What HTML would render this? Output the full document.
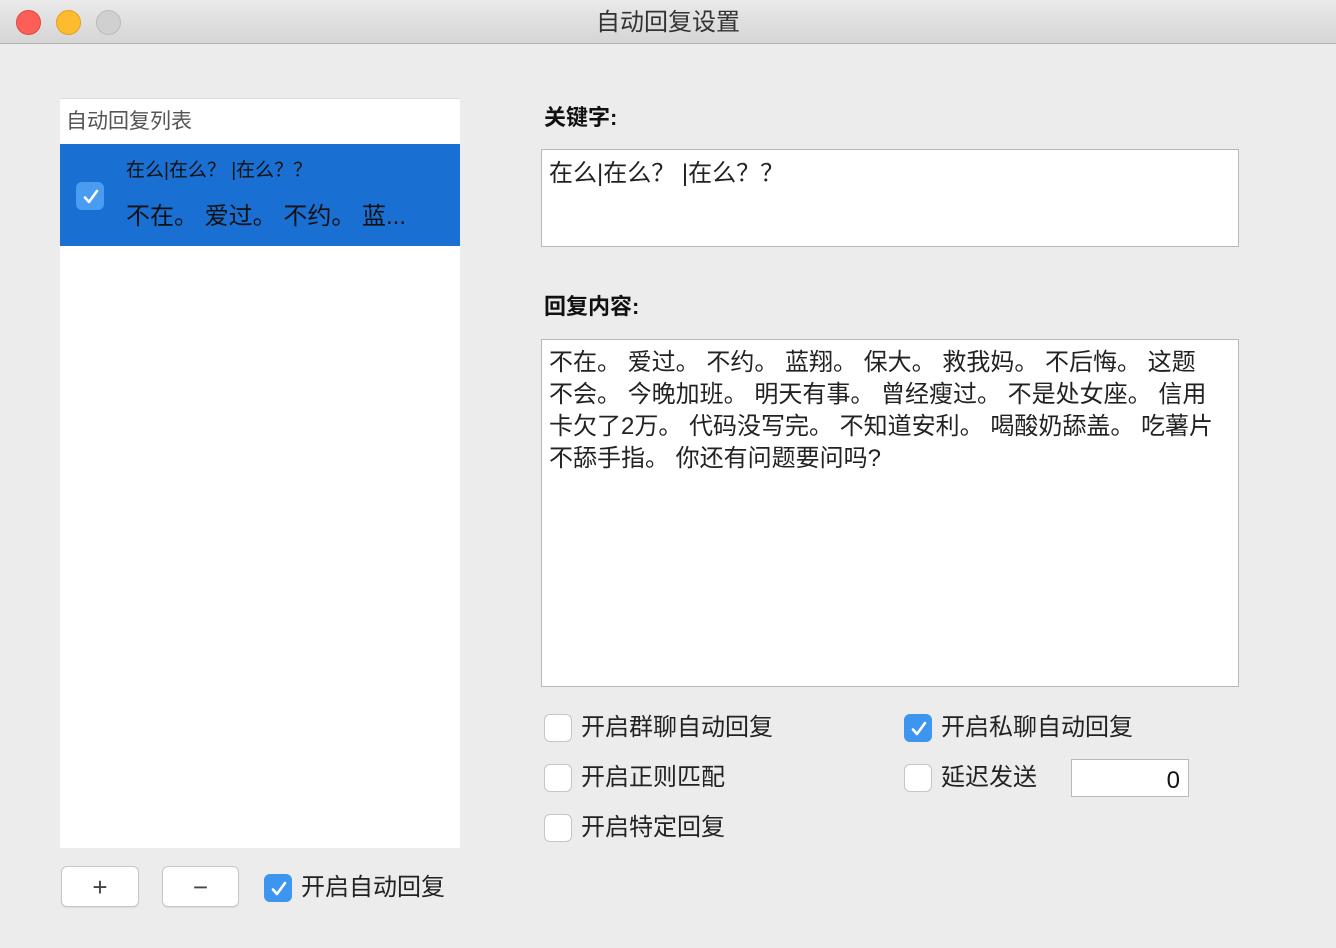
<!DOCTYPE html>
<html><head><meta charset="utf-8"><style>
*{margin:0;padding:0;box-sizing:border-box}
body{width:1336px;height:948px;background:#ececec;font-family:"Liberation Sans","Noto Sans CJK SC",sans-serif;position:relative;overflow:hidden;color:#222}
.abs{position:absolute}
.tb{left:0;top:0;width:1336px;height:44px;background:linear-gradient(#ebeaeb,#d6d5d6);border-bottom:1px solid #b3b3b3;text-align:center;font-size:24px;line-height:46px;color:#333}
.dot{width:25px;height:25px;border-radius:50%;top:10px}
.cb{width:28px;height:28px;border-radius:6px;background:#fff;border:1px solid #c6c6c6}
.cb.on{background:#3d95f0;border-color:#3d95f0}
.cb.on svg{position:absolute;left:4px;top:4px}
.lbl{font-size:24px;line-height:30px;color:#222}
.ta{background:#fff;border:1px solid #b9b9b9;font-size:24px;line-height:32px;padding:7px 7px;color:#222;white-space:nowrap}
.btn{background:#fff;border:1px solid #c8c8c8;border-radius:6px;height:41px;top:866px;text-align:center;font-size:26px;line-height:40px;color:#444;box-shadow:0 1px 1px rgba(0,0,0,.08)}
</style></head><body>
<div class="abs tb">自动回复设置</div>
<div class="abs dot" style="left:16px;background:#fc5f57;border:1px solid #e0443e"></div>
<div class="abs dot" style="left:56px;background:#fdbc2e;border:1px solid #dea123"></div>
<div class="abs dot" style="left:96px;background:#d0d0d0;border:1px solid #bcbcbc"></div>

<div class="abs" style="left:60px;top:98px;width:400px;height:750px;background:#fff;border-top:1px solid #ddd"></div>
<div class="abs" style="left:66px;top:105px;font-size:21px;color:#555">自动回复列表</div>
<div class="abs" style="left:60px;top:144px;width:400px;height:102px;background:#1a6fd2"></div>
<div class="abs cb on" style="left:76px;top:182px;background:#4a9cf0;border-color:#4a9cf0"><svg width="20" height="20" viewBox="0 0 20 20"><path d="M4 10.5l4 4.5 8-11" stroke="#fff" stroke-width="2.6" fill="none" stroke-linecap="round" stroke-linejoin="round"/></svg></div>
<div class="abs" style="left:126px;top:155px;font-size:19px;color:#111">在么|在么？ |在么？？</div>
<div class="abs" style="left:126px;top:196px;font-size:24px;color:#111">不在。 爱过。 不约。 蓝...</div>

<div class="abs" style="left:544px;top:100px;font-size:22px;font-weight:bold;color:#111">关键字:</div>
<div class="abs ta" style="left:541px;top:149px;width:698px;height:98px;padding-top:8px">在么|在么？ |在么？？</div>
<div class="abs" style="left:544px;top:289px;font-size:22px;font-weight:bold;color:#111">回复内容:</div>
<div class="abs ta" style="left:541px;top:339px;width:698px;height:348px">不在。 爱过。 不约。 蓝翔。 保大。 救我妈。 不后悔。 这题<br>不会。 今晚加班。 明天有事。 曾经瘦过。 不是处女座。 信用<br>卡欠了2万。 代码没写完。 不知道安利。 喝酸奶舔盖。 吃薯片<br>不舔手指。 你还有问题要问吗?</div>

<div class="abs cb" style="left:544px;top:714px"></div><div class="abs lbl" style="left:581px;top:713px">开启群聊自动回复</div>
<div class="abs cb on" style="left:904px;top:714px"><svg width="20" height="20" viewBox="0 0 20 20"><path d="M4 10.5l4 4.5 8-11" stroke="#fff" stroke-width="2.6" fill="none" stroke-linecap="round" stroke-linejoin="round"/></svg></div><div class="abs lbl" style="left:941px;top:713px">开启私聊自动回复</div>
<div class="abs cb" style="left:544px;top:764px"></div><div class="abs lbl" style="left:581px;top:763px">开启正则匹配</div>
<div class="abs cb" style="left:904px;top:764px"></div><div class="abs lbl" style="left:941px;top:763px">延迟发送</div>
<div class="abs" style="left:1071px;top:759px;width:118px;height:38px;background:#fff;border:1px solid #b9b9b9;font-size:24px;text-align:right;padding-right:8px;line-height:42px;color:#111">0</div>
<div class="abs cb" style="left:544px;top:814px"></div><div class="abs lbl" style="left:581px;top:813px">开启特定回复</div>

<div class="abs btn" style="left:61px;width:78px">+</div>
<div class="abs btn" style="left:162px;width:77px">−</div>
<div class="abs cb on" style="left:264px;top:874px"><svg width="20" height="20" viewBox="0 0 20 20"><path d="M4 10.5l4 4.5 8-11" stroke="#fff" stroke-width="2.6" fill="none" stroke-linecap="round" stroke-linejoin="round"/></svg></div><div class="abs lbl" style="left:301px;top:873px">开启自动回复</div>
</body></html>
